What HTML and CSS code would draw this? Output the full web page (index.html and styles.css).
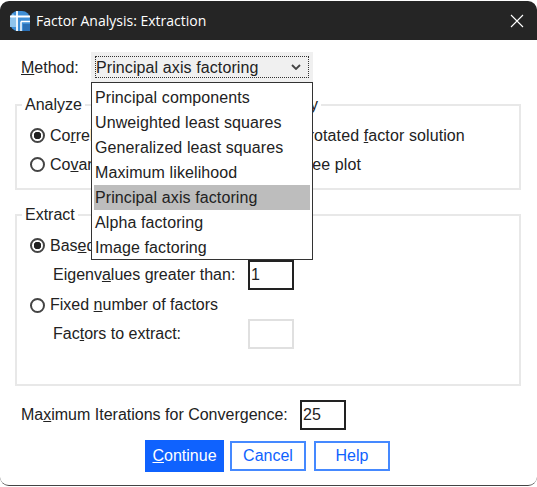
FILE: index.html
```html
<!DOCTYPE html>
<html lang="en">
<head>
  <meta charset="UTF-8">
  <meta name="viewport" content="width=device-width, initial-scale=1.0">
  <title>Factor Analysis: Extraction</title>
  <link rel="stylesheet" href="styles.css">
</head>
<body>
  <div class="dialog">
    <div class="titlebar">
      <svg class="app-icon" width="20" height="20" viewBox="0 0 20 20">
        <path d="M8 0h4a8 8 0 0 1 8 8v12H8a8 8 0 0 1-8-8V8a8 8 0 0 1 8-8z" fill="#3f8fd6"/>
        <path d="M3 2.500a8 8 0 0 0-3 6.500V16h6V7z" fill="#8fc4ec"/>
        <path d="M0 5.500h20M7 0v20" stroke="#fff" stroke-width="1.800"/>
        <path d="M11 10.500h9M11 10.500V20" stroke="#fff" stroke-width="1.500"/>
        <rect x="13" y="13" width="7" height="7" fill="#2a6fb5"/>
      </svg>
      <span class="title">Factor Analysis: Extraction</span>
      <svg class="close-icon" width="14" height="14" viewBox="0 0 14 14">
        <path d="M1 1l12 12M13 1L1 13" stroke="#fff" stroke-width="1.100" fill="none"/>
      </svg>
    </div>

    <div class="content">
      <div class="method-row">
        <label class="method-label"><u>M</u>ethod:</label>
        <div class="combo-wrap">
          <div class="combo">
            <div class="combo-focus">
              <span class="combo-text">Principal axis factoring</span>
              <svg width="10" height="6" viewBox="0 0 10 6">
                <path d="M1 1l4 4 4-4" stroke="#444" stroke-width="1.800" fill="none"/>
              </svg>
            </div>
          </div>
          <ul class="menu">
            <li>Principal components</li>
            <li>Unweighted least squares</li>
            <li>Generalized least squares</li>
            <li>Maximum likelihood</li>
            <li class="selected">Principal axis factoring</li>
            <li>Alpha factoring</li>
            <li>Image factoring</li>
          </ul>
        </div>
      </div>

      <div class="top-groups">
        <fieldset class="group group-analyze">
          <legend>Analyze</legend>
          <label class="option"><span class="radio checked"></span><span>Co<u>r</u>relation matrix</span></label>
          <label class="option"><span class="radio"></span><span>Co<u>v</u>ariance matrix</span></label>
        </fieldset>
        <fieldset class="group group-display">
          <legend>Display</legend>
          <label class="option"><span class="check"></span><span>Unrotated <u>f</u>actor solution</span></label>
          <label class="option"><span class="check"></span><span>Scree plot</span></label>
        </fieldset>
      </div>

      <fieldset class="group group-extract">
        <legend>Extract</legend>
        <label class="option"><span class="radio checked"></span><span>Bas<u>e</u>d on Eigenvalue</span></label>
        <div class="sub-row">
          <span>Eigenv<u>a</u>lues greater than:</span>
          <div class="field active">1</div>
        </div>
        <label class="option option-fixed"><span class="radio"></span><span>Fixed <u>n</u>umber of factors</span></label>
        <div class="sub-row">
          <span>Fac<u>t</u>ors to extract:</span>
          <div class="field disabled"></div>
        </div>
      </fieldset>

      <div class="iter-row">
        <span>Ma<u>x</u>imum Iterations for Convergence:</span>
        <div class="field active">25</div>
      </div>

      <div class="buttons">
        <button class="btn primary"><u>C</u>ontinue</button>
        <button class="btn cancel">Cancel</button>
        <button class="btn help">Help</button>
      </div>
    </div>
  </div>
</body>
</html>
```

FILE: styles.css
```css
* {
  box-sizing: border-box;
}

body {
  margin: 0;
  background-color: #fff;
  font-family: "Liberation Sans", Arial, sans-serif;
  font-size: 16px;
  color: #222;
}

.dialog {
  width: 537px;
  height: 486px;
  background-color: #fff;
  border-bottom: 1px solid #444;
  border-radius: 9px;
  overflow: hidden;
}

.titlebar {
  display: flex;
  align-items: center;
  height: 39px;
  margin-top: 1px;
  padding: 0 13px 0 10px;
  background-color: #252525;
  color: #fff;
  border-radius: 9px 9px 0 0;
}

.app-icon {
  margin-right: 6px;
}

.title {
  flex: 1;
  font-family: "Open Sans", sans-serif;
  font-size: 14px;
}

.content {
  padding: 12px 16px 0 15px;
}

.method-row {
  display: flex;
  align-items: center;
  height: 30px;
  padding-left: 6px;
}

.method-label {
  width: 70px;
  padding-top: 2px;
}

.combo-wrap {
  position: relative;
  letter-spacing: 0.1px;
}

.combo {
  width: 222px;
  height: 30px;
  padding: 4px;
  background-color: #f0f0f0;
}

.combo-focus {
  display: flex;
  align-items: center;
  justify-content: space-between;
  height: 22px;
  padding-right: 7px;
  border: 1px dotted #333;
}

.combo-text {
  padding-top: 2px;
}

.menu {
  position: absolute;
  top: 30px;
  left: 0;
  z-index: 5;
  width: 222px;
  height: 178px;
  margin: 0;
  padding: 2px;
  list-style: none;
  background-color: #fff;
  border: 1px solid #333;
}

.menu li {
  height: 25px;
  padding-left: 1px;
  line-height: 25px;
}

.menu li.selected {
  background-color: #bdbdbd;
}

.top-groups {
  display: flex;
  gap: 5px;
  margin-top: 14px;
}

.group {
  min-width: 0;
  margin: 0;
  padding: 7px 0 0 13px;
  border: 2px solid #e8e8e8;
}

.group legend {
  margin-left: -8px;
  padding: 0 3px;
  font-size: 16px;
  line-height: 18px;
}

.group-analyze {
  width: 235px;
  height: 94px;
  border-right: none;
}

.group-display {
  width: 266px;
  height: 94px;
  padding-left: 13px;
  border-left: none;
  letter-spacing: 0.1px;
}

.group-display legend {
  margin-left: -6px;
}

.group-extract {
  width: 506px;
  height: 180px;
  margin-top: 16px;
}

.option {
  display: flex;
  align-items: center;
  height: 29px;
}

.option-fixed {
  padding-top: 1px;
}

.radio {
  width: 15px;
  height: 15px;
  margin-right: 5px;
  border: 2px solid #444;
  border-radius: 50%;
  background-color: #fff;
}

.radio.checked {
  background: radial-gradient(circle, #222 0 3.5px, #fff 4px);
}

.check {
  width: 15px;
  height: 15px;
  margin-right: 5px;
  border: 2px solid #444;
}

.sub-row {
  display: flex;
  align-items: center;
  justify-content: space-between;
  width: 264px;
  height: 30px;
  padding-left: 23px;
  white-space: nowrap;
}

.field {
  width: 46px;
  height: 30px;
  padding-left: 1px;
  line-height: 26px;
  background-color: #fff;
}

.field.active {
  border: 2px solid #222;
}

.field.disabled {
  border: 2px solid #e0e0e0;
}

.iter-row {
  display: flex;
  align-items: center;
  height: 30px;
  margin-top: 14px;
  padding-left: 6px;
}

.iter-row span {
  width: 279px;
}

.buttons {
  display: flex;
  align-items: center;
  height: 32px;
  margin-top: 10px;
  margin-left: 130px;
}

.btn {
  height: 30px;
  padding: 0;
  font-family: "Liberation Sans", Arial, sans-serif;
  font-size: 16px;
  color: #0f62fe;
  background-color: #fff;
  border: 2px solid #4589ff;
}

.btn.primary {
  width: 79px;
  height: 32px;
  color: #fff;
  background-color: #0f62fe;
  border-color: #0f62fe;
}

.btn.cancel {
  width: 76px;
  margin-left: 6px;
}

.btn.help {
  width: 76px;
  margin-left: 8px;
}
```
